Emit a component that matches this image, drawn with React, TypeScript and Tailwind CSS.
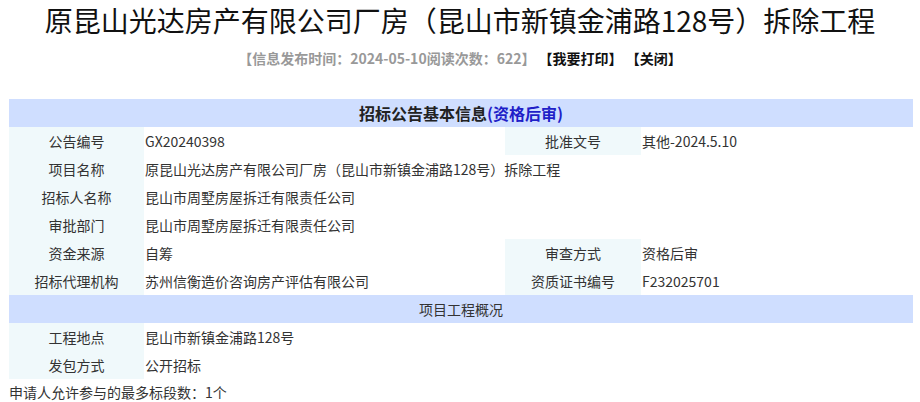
const font = "font-['Microsoft_YaHei','Noto_Sans_CJK_SC',sans-serif]";

type Cell = { label: string; value: string; label2?: string; value2?: string };

const basic: Cell[] = [
  { label: "公告编号", value: "GX20240398", label2: "批准文号", value2: "其他-2024.5.10" },
  { label: "项目名称", value: "原昆山光达房产有限公司厂房（昆山市新镇金浦路128号）拆除工程" },
  { label: "招标人名称", value: "昆山市周墅房屋拆迁有限责任公司" },
  { label: "审批部门", value: "昆山市周墅房屋拆迁有限责任公司" },
  { label: "资金来源", value: "自筹", label2: "审查方式", value2: "资格后审" },
  { label: "招标代理机构", value: "苏州信衡造价咨询房产评估有限公司", label2: "资质证书编号", value2: "F232025701" },
];

const overview: Cell[] = [
  { label: "工程地点", value: "昆山市新镇金浦路128号" },
  { label: "发包方式", value: "公开招标" },
];

function Row({ row }: { row: Cell }) {
  return (
    <tr className="h-[28px]">
      <td className="bg-[#f0f9fb] text-center">{row.label}</td>
      {row.label2 ? (
        <>
          <td className="pl-px">{row.value}</td>
          <td className="bg-[#f0f9fb] text-center">{row.label2}</td>
          <td className="pl-px">{row.value2}</td>
        </>
      ) : (
        <td className="pl-px" colSpan={3}>
          {row.value}
        </td>
      )}
    </tr>
  );
}

export default function App() {
  return (
    <div className={`${font} w-[920px] h-[402px] bg-white text-[#333] overflow-hidden`}>
      <h1 className="text-center text-[28px] leading-[40px] text-[#111] font-normal">
        原昆山光达房产有限公司厂房（昆山市新镇金浦路128号）拆除工程
      </h1>
      <p className="mt-2 text-center text-[14px] leading-[20px] font-bold">
        <span className="text-[#999]">【信息发布时间：2024-05-10阅读次数：622】</span>
        <span className="text-[#111]"> 【我要打印】 【关闭】</span>
      </p>

      <table className="mt-[31px] ml-[9px] w-[904px] table-fixed border-collapse text-[14px] leading-[20px]">
        <colgroup>
          <col className="w-[135px]" />
          <col className="w-[361px]" />
          <col className="w-[136px]" />
          <col className="w-[272px]" />
        </colgroup>
        <tbody>
          <tr className="h-[28px] bg-[#cfdeff]">
            <td colSpan={4} className="text-center text-[16px] font-bold text-[#222]">
              招标公告基本信息<span className="text-[#1f1fc8]">(资格后审)</span>
            </td>
          </tr>
          {basic.map((r) => (
            <Row key={r.label} row={r} />
          ))}
          <tr className="h-[28px] bg-[#cfdeff]">
            <td colSpan={4} className="text-center">
              项目工程概况
            </td>
          </tr>
          {overview.map((r) => (
            <Row key={r.label} row={r} />
          ))}
        </tbody>
      </table>

      <p className="ml-[9px] mt-[3px] text-[14px] leading-[20px]">申请人允许参与的最多标段数：1个</p>
    </div>
  );
}
